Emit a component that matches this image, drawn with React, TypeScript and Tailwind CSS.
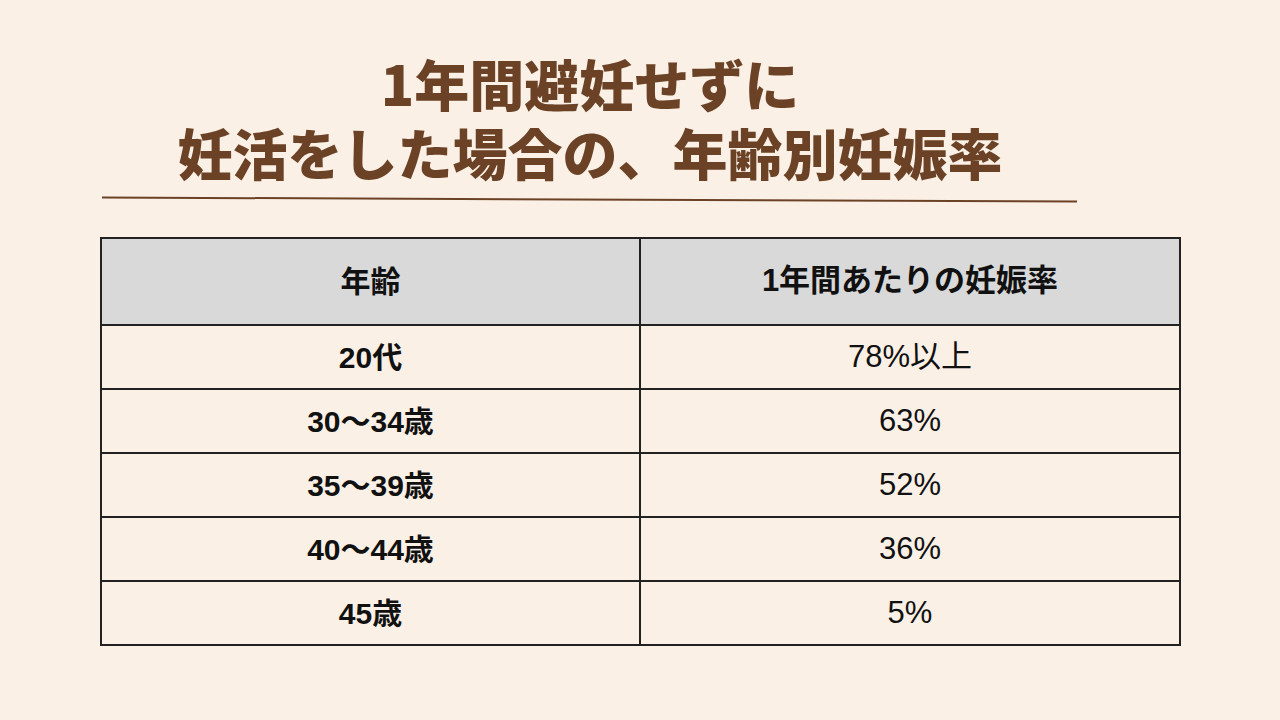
const rows: [string, string][] = [
  ["20代", "78%以上"],
  ["30〜34歳", "63%"],
  ["35〜39歳", "52%"],
  ["40〜44歳", "36%"],
  ["45歳", "5%"],
];

export default function App() {
  return (
    <div
      className="w-[1280px] h-[720px] bg-[#fbf0e6] overflow-hidden"
      style={{ fontFamily: '"Liberation Sans", "Noto Sans CJK JP", sans-serif' }}
    >
      <div className="ml-[100px] w-[980px] pt-[48px]">
        <div
          className="text-center text-[#6b4226] font-black text-[55px] leading-[69px]"
          style={{ fontFamily: '"Noto Sans CJK JP", sans-serif' }}
        >
          <div>1年間避妊せずに</div>
          <div>妊活をした場合の、年齢別妊娠率</div>
        </div>
        <svg width="980" height="8" className="block mt-[10px]">
          <line x1="2" y1="1.5" x2="977" y2="5.5" stroke="#6b4226" strokeWidth="2" />
        </svg>
      </div>

      <div className="ml-[100px] mt-[33px] w-[1081px] border-2 border-[#222] text-[31px] text-[#111]">
        <div className="grid grid-cols-[539px_1fr] h-[85px] bg-[#d9d9d9] font-bold">
          <div className="flex items-center justify-center border-r-2 border-[#222] text-[30px]">年齢</div>
          <div className="flex items-center justify-center">1年間あたりの妊娠率</div>
        </div>
        {rows.map(([age, rate]) => (
          <div key={age} className="grid grid-cols-[539px_1fr] h-[64px] border-t-2 border-[#222]">
            <div className="flex items-center justify-center border-r-2 border-[#222] font-bold text-[30px]">{age}</div>
            <div className="flex items-center justify-center">{rate}</div>
          </div>
        ))}
      </div>
    </div>
  );
}
